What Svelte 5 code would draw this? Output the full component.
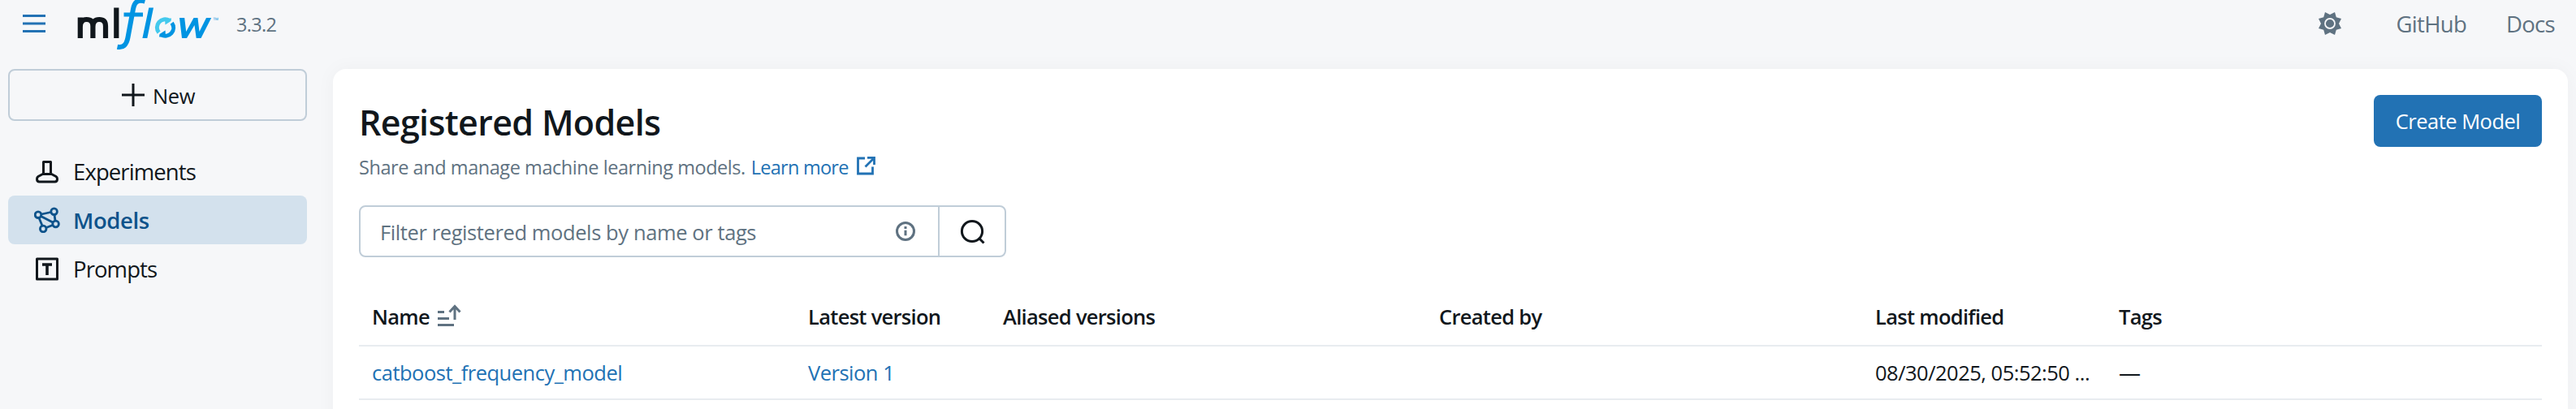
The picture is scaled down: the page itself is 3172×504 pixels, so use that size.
<script>
  const nav = [
    { id: 'experiments', label: 'Experiments' },
    { id: 'models', label: 'Models', active: true },
    { id: 'prompts', label: 'Prompts' }
  ];
</script>

<div class="app">
  <header>
    <svg class="burger" width="32" height="32" viewBox="0 0 16 16"><path fill="currentColor" d="M1 2.500h14V4H1zM1 7.250h14v1.500H1zM1 12h14v1.500H1z" /></svg>
    <svg class="logo" width="180" height="62" viewBox="0 0 180 62">
      <g fill="none" stroke="#11171c" stroke-width="6.200">
        <path d="M6.800 47V21.500M6.800 47V33Q6.800 24 14.600 24Q22.400 24 22.400 32V47M22.400 47V33Q22.400 24 30.200 24Q38 24 38 32V47" />
        <path d="M51.300 9.500V47" />
      </g>
      <g fill="none" stroke="#0194e2" stroke-width="6">
        <path d="M86.500 1.500C77-1 73.500 3 72 11L65.500 46Q63 60 52.500 57.800" />
        <path d="M60.500 18H84" stroke-width="5" />
      </g>
      <path fill="#0194e2" d="M91.300 9.500H97L89.300 47H83.400zM129 22h6.200l2 17 9.300-17h5l2 17 8.500-17H168.200L155.500 47H149.700L147.500 31 138 47H132z" />
      <path fill="none" stroke="#43c9ed" stroke-width="5" d="M103.600 40.200A10 10 0 0 1 116.500 25.300" />
      <path fill="#43c9ed" d="M119 22.500 118.500 26 111.500 30.500 111 23z" />
      <path fill="none" stroke="#0194e2" stroke-width="5" d="M119.600 28.200A10 10 0 0 1 106.500 42.800" />
      <path fill="#0194e2" d="M104 45.500 104.500 42 111.500 37.500 112 45z" />
      <text x="170.500" y="27.500" font-size="9" fill="#43a9e2">™</text>
    </svg>
    <span class="version">3.3.2</span>
    <div class="links">
      <svg class="gear" width="32" height="32" viewBox="0 0 32 32"><path fill="currentColor" d="M10 2 16 5 22 2 23.800 8.200 30 10 27 16 30 22 23.800 23.800 22 30 16 27 10 30 8.200 23.800 2 22 5 16 2 10 8.200 8.200z" /><circle cx="16" cy="16" r="6" fill="none" stroke="#f6f7f9" stroke-width="1.800" /></svg>
      <span class="gh">GitHub</span><span class="docs">Docs</span>
    </div>
  </header>
  <div class="body">
    <aside>
      <button class="new"><svg width="32" height="32" viewBox="0 0 32 32"><path d="M16 2V30M2 16H30" stroke="currentColor" stroke-width="3" /></svg><span>New</span></button>
      <nav>
        {#each nav as item}
          <div class="item" class:active={item.active}>
            {#if item.id === 'experiments'}
              <svg width="32" height="32" viewBox="0 0 32 32" fill="none" stroke="currentColor" stroke-width="3" stroke-linejoin="round"><path d="M11.500 4.500h9V19L27 22.500Q28.500 23.500 28.500 25.500Q28.500 29 25.500 29H6.500Q3.500 29 3.500 25.500Q3.500 23.500 5 22.500L11.500 19zM11.500 19.500h9" /></svg>
            {:else if item.id === 'models'}
              <svg width="32" height="32" viewBox="0 0 32 32" fill="none" stroke="currentColor" stroke-width="2.800"><circle cx="5" cy="9.700" r="3.800" /><circle cx="24.600" cy="5.700" r="3.800" /><circle cx="26.600" cy="21" r="3.800" /><circle cx="11.200" cy="27" r="3.800" /><path d="M9 9 20.500 6.500M25 9.500 26 17M6 13.500 10 23M8.500 11.500 23 19M15 25.500 22.700 22.500" /></svg>
            {:else}
              <svg width="32" height="32" viewBox="0 0 32 32" fill="none" stroke="currentColor" stroke-width="3"><path stroke-linejoin="round" d="M3.500 4h25v25h-25z" /><path d="M10 11h12M16 11V24" stroke-width="3.600" /></svg>
            {/if}
            <span>{item.label}</span>
          </div>
        {/each}
      </nav>
    </aside>
    <main>
      <div class="top">
        <h1>Registered Models</h1>
        <button class="create"><span>Create Model</span></button>
      </div>
      <p class="sub"><span class="desc">Share and manage machine learning models.</span><a href="#learn"><span>Learn more</span><svg width="26" height="26" viewBox="0 0 26 26" fill="none" stroke="currentColor" stroke-width="2.800"><path d="M12 4H3.500V23H21.500V14.500M15 3.400h8.500v8.500M23 4 12.500 14.500" /></svg></a></p>
      <div class="search">
        <div class="field"><span>Filter registered models by name or tags</span>
          <svg width="28" height="28" viewBox="0 0 28 28" fill="none" stroke="currentColor" stroke-width="3"><circle cx="14" cy="14" r="10.500" /><path d="M14 12.800V19.300M14 8V11" /></svg></div>
        <div class="go"><svg width="32" height="32" viewBox="0 0 32 32" fill="none" stroke="currentColor" stroke-width="3"><circle cx="16" cy="16" r="12.600" /><path d="M24.500 24.500 30.500 30.500" /></svg></div>
      </div>
      <div class="row head">
        <div class="c1"><span>Name</span><svg width="32" height="32" viewBox="0 0 32 32" fill="none" stroke="#5f7281" stroke-width="3"><path d="M2 10.500H10M2 18.500H16M2 26.500H22M23 3V20M16.500 10.500 23 3.500 29.500 10.500" /></svg></div>
        <div><span>Latest version</span></div>
        <div><span>Aliased versions</span></div>
        <div><span>Created by</span></div>
        <div><span>Last modified</span></div>
        <div><span>Tags</span></div>
      </div>
      <div class="row data">
        <div class="link"><span>catboost_frequency_model</span></div>
        <div class="link"><span>Version 1</span></div>
        <div></div><div></div>
        <div><span>08/30/2025, 05:52:50 ...</span></div>
        <div><span class="dash">—</span></div>
      </div>
    </main>
  </div>
</div>

<style>
  :global(body) { background: #f6f7f9; overflow: hidden; }
  * { box-sizing: border-box; }
  .app { width: 3172px; height: 504px; overflow: hidden; background: #f6f7f9; color: #11171c; font: 25.5px/40px "Open Sans", sans-serif; letter-spacing: -.5px; display: flex; flex-direction: column; }
  svg { display: block; flex: none; }
  span { white-space: nowrap; }
  header { height: 85px; flex: none; display: flex; align-items: flex-start; color: #5f7281; }
  .burger { margin: 13px 0 0 26px; color: #2272b4; }
  .logo { margin: 0 0 0 34px; }
  .version { margin: 10px 0 0 19px; font-size: 23.5px; letter-spacing: -.7px; }
  .links { margin-left: auto; display: flex; padding-right: 26px; font-size: 27.5px; letter-spacing: -.7px; }
  .gear { margin: 13px 66px 0 0; }
  .gh, .docs { margin-top: 10px; }
  .docs { margin-left: 49px; }
  .body { display: flex; flex: 1; min-height: 0; }
  aside { width: 410px; padding-left: 10px; flex: none; }
  button { font: inherit; letter-spacing: inherit; padding: 0; }
  .new { width: 368px; height: 64px; border: 2px solid #c0cdd8; border-radius: 8px; background: transparent; color: #11171c; display: flex; align-items: center; justify-content: center; gap: 8px; }
  .new span { padding-top: 1px; }
  nav { margin-top: 32px; }
  .item { width: 368px; height: 60px; border-radius: 8px; display: flex; align-items: center; gap: 16px; padding-left: 32px; font-size: 27.5px; letter-spacing: -.9px; }
  .item span { padding-top: 2px; }
  .active { background: #d3e1ed; color: #0e538b; font-weight: 600; letter-spacing: -.4px; }
  main { width: 2752px; height: 440px; background: #fff; border-radius: 16px 16px 0 0; padding: 32px 32px 0; box-shadow: 0 0 24px rgba(0,0,0,.04); }
  .top { display: flex; justify-content: space-between; height: 64px; }
  h1 { margin: 2px 0 0; font-size: 43px; line-height: 64px; font-weight: 600; letter-spacing: -.65px; }
  .create { width: 207px; height: 64px; border: 0; border-radius: 8px; background: #2272b4; color: #fff; }
  .sub { margin: 5px 0 0; height: 40px; display: flex; gap: 7px; color: #5f7281; font-size: 23.5px; letter-spacing: -.44px; }
  a { display: flex; gap: 8px; color: #2272b4; text-decoration: none; letter-spacing: -.75px; }
  a svg { margin-top: 5px; }
  .search { width: 797px; height: 64px; margin-top: 27px; border: 2px solid #c0cdd8; border-radius: 8px; display: flex; }
  .field { flex: 1; display: flex; align-items: center; justify-content: space-between; padding: 0 26px 0 24px; color: #5f7281; letter-spacing: -.4px; }
  .field span { padding-top: 1px; }
  .go { width: 82px; border-left: 2px solid #c0cdd8; display: grid; place-items: center; }
  .row { display: grid; grid-template-columns: 537px 240px 537px 537px 300px 1fr; padding-left: 16px; border-bottom: 2px solid #e8ecf0; align-items: center; }
  .head { height: 72px; margin-top: 38px; font-weight: 600; letter-spacing: -.7px; }
  .data { height: 66px; }
  .c1 { display: flex; align-items: center; gap: 8px; }
  .link { color: #2272b4; }
  .dash { font-size: 27px; }
</style>
